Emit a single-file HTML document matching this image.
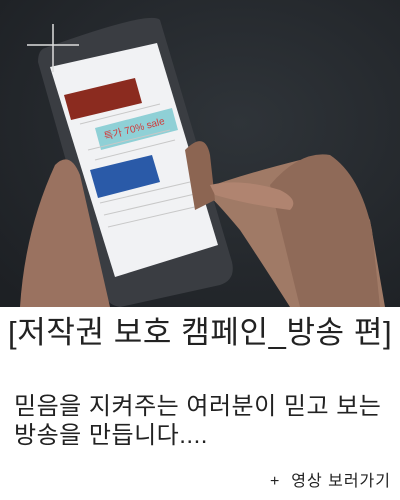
<!DOCTYPE html>
<html><head><meta charset="utf-8"><style>
body{margin:0;width:400px;height:500px;background:#fff;overflow:hidden;font-family:"Liberation Sans","Noto Sans CJK KR",sans-serif;color:#222}
.ph{position:absolute;left:0;top:0;width:400px;height:307px}
.t{position:absolute;left:8px;top:307px;font-size:31px;white-space:nowrap;letter-spacing:0.6px}
.b{position:absolute;left:14px;top:392px;font-size:24px;line-height:29px;letter-spacing:0.5px;white-space:nowrap}
.m{position:absolute;right:9px;top:467px;font-size:16px;letter-spacing:1px}
</style></head><body>
<svg class="ph" viewBox="0 0 400 307">
<defs><radialGradient id="bg" cx="0.6" cy="0.4" r="0.8"><stop offset="0" stop-color="#2f3439"/><stop offset="1" stop-color="#1d2024"/></radialGradient></defs>
<rect width="400" height="307" fill="url(#bg)"/>
<path d="M200 190 Q240 175 300 160 Q340 170 370 220 L385 307 L290 307 Q260 260 240 230 Q215 200 205 192Z" fill="#a07a66"/>
<path d="M270 185 Q300 150 330 155 Q360 175 372 230 L380 307 L300 307Z" fill="#8f6a58"/>
<path d="M45 48 Q150 10 160 20 L232 262 Q236 280 220 285 L120 307 Q108 305 104 295 L38 62 Q38 50 45 48Z" fill="#3a3d42"/>
<path d="M50 67 L157 43 L218 245 L115 277Z" fill="#f1f2f4"/>
<path d="M64 95 L135 78 L142 103 L71 120Z" fill="#8b2b1f"/>
<path d="M95 128 L172 108 L178 130 L101 150Z" fill="#8fd0d6"/>
<text x="105" y="140" font-size="10" fill="#d23a3a" transform="rotate(-15 105 140)">특가 70% sale</text>
<path d="M90 170 L152 155 L160 182 L98 198Z" fill="#2a5aa8"/>
<g stroke="#c8c8c8" stroke-width="1"><line x1="80" y1="124" x2="160" y2="104"/><line x1="88" y1="150" x2="170" y2="130"/><line x1="95" y1="160" x2="175" y2="140"/><line x1="100" y1="203" x2="190" y2="182"/><line x1="104" y1="215" x2="195" y2="194"/><line x1="108" y1="227" x2="199" y2="206"/></g>
<path d="M20 307 Q25 230 55 165 Q70 150 80 175 L110 307Z" fill="#9a7260"/>
<path d="M185 150 Q205 130 210 155 L215 200 L195 210Z" fill="#8c6552"/>
<path d="M210 185 Q240 178 280 190 Q300 200 290 210 Q250 205 215 195Z" fill="#b08470"/>
<line x1="27" y1="45" x2="79" y2="45" stroke="#ddd" stroke-width="1.5"/>
<line x1="53" y1="24" x2="53" y2="72" stroke="#ddd" stroke-width="1.5"/>
</svg>
<div class="t">[저작권 보호 캠페인_방송 편]</div>
<div class="b">믿음을 지켜주는 여러분이 믿고 보는<br>방송을 만듭니다....</div>
<div class="m">+&nbsp; 영상 보러가기</div>
</body></html>
